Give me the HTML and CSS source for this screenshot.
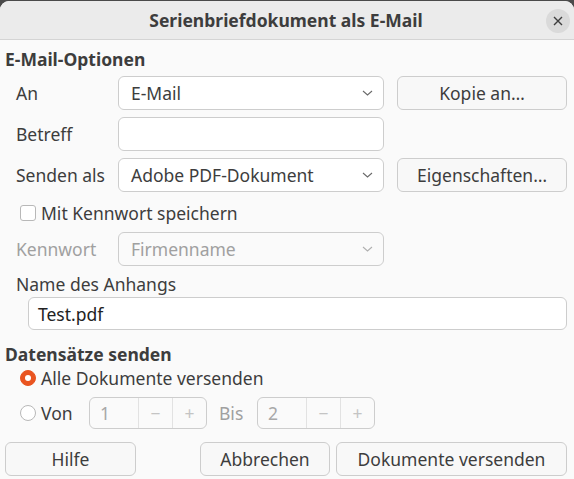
FILE: index.html
```html
<!DOCTYPE html>
<html lang="de">
<head>
<meta charset="utf-8">
<title>Serienbriefdokument als E-Mail</title>
<link rel="stylesheet" href="styles.css">
</head>
<body>
<div class="dialog">
  <div class="titlebar">
    <div class="title">Serienbriefdokument als E-Mail</div>
    <div class="close">
      <svg width="10" height="10" viewBox="0 0 10 10"><path d="M1 1 L9 9 M9 1 L1 9" stroke="#3d3d3d" stroke-width="1.4" fill="none"/></svg>
    </div>
  </div>
  <div class="content">
    <div class="section-title first">E-Mail-Optionen</div>
    <div class="form">
      <div class="label">An</div>
      <div class="combo"><span>E-Mail</span><svg class="chev" width="11" height="6" viewBox="0 0 11 6"><path d="M1 1 L5.5 5 L10 1" stroke="#6a6a6a" stroke-width="1.1" fill="none"/></svg></div>
      <div class="btn">Kopie an…</div>

      <div class="label">Betreff</div>
      <div class="entry"></div>
      <div></div>

      <div class="label">Senden als</div>
      <div class="combo"><span>Adobe PDF-Dokument</span><svg class="chev" width="11" height="6" viewBox="0 0 11 6"><path d="M1 1 L5.5 5 L10 1" stroke="#6a6a6a" stroke-width="1.1" fill="none"/></svg></div>
      <div class="btn">Eigenschaften…</div>

      <div class="check-row"><span class="checkbox"></span><span>Mit Kennwort speichern</span></div>

      <div class="label disabled">Kennwort</div>
      <div class="combo disabled"><span>Firmenname</span><svg class="chev" width="11" height="6" viewBox="0 0 11 6"><path d="M1 1 L5.5 5 L10 1" stroke="#b0b0b0" stroke-width="1.1" fill="none"/></svg></div>
      <div></div>
    </div>
    <div class="attach-label">Name des Anhangs</div>
    <div class="entry attach">Test.pdf</div>

    <div class="section-title second">Datensätze senden</div>
    <div class="radio-row first-radio"><span class="radio checked"></span><span>Alle Dokumente versenden</span></div>
    <div class="radio-row range">
      <span class="radio"></span><span class="von">Von</span>
      <div class="spin"><span class="spin-val">1</span><span class="spin-btn">−</span><span class="spin-btn">+</span></div>
      <span class="bis">Bis</span>
      <div class="spin"><span class="spin-val">2</span><span class="spin-btn">−</span><span class="spin-btn">+</span></div>
    </div>

    <div class="buttons">
      <div class="btn help">Hilfe</div>
      <div class="spacer"></div>
      <div class="btn cancel">Abbrechen</div>
      <div class="btn send">Dokumente versenden</div>
    </div>
  </div>
</div>
</body>
</html>
```

FILE: styles.css
```css
* { box-sizing: border-box; }
html, body {
  margin: 0;
  padding: 0;
  background: #4a4a4a;
  height: 479px;
  overflow: hidden;
}
body {
  font-family: "Noto Sans", "DejaVu Sans", sans-serif;
  font-size: 17.5px;
  color: #3d3d3d;
}
.dialog {
  margin-top: 1px;
  height: 478px;
  background: #fafafa;
  border-radius: 9px 9px 0 0;
  overflow: hidden;
}
.titlebar {
  height: 39px;
  background: #ebebeb;
  border-bottom: 1px solid #d4d4d4;
  display: flex;
  align-items: center;
  justify-content: center;
  position: relative;
}
.title {
  font-weight: bold;
  font-size: 17.5px;
  margin-left: -2px;
}
.close {
  position: absolute;
  right: 4px;
  top: 8px;
  width: 24px;
  height: 24px;
  border-radius: 50%;
  background: #dadada;
  display: flex;
  align-items: center;
  justify-content: center;
}
.content {
  padding: 0 7px 0 5px;
}
.section-title {
  font-weight: bold;
  line-height: 24px;
}
.section-title.first { margin-top: 7px; }
.form {
  margin-top: 5px;
  display: grid;
  grid-template-columns: 100px 266px 170px;
  column-gap: 13px;
  grid-auto-rows: auto;
  row-gap: 7px;
}
.label {
  padding-left: 11px;
  display: flex;
  align-items: center;
  height: 34px;
}
.disabled { color: #a0a0a0; }
.combo, .entry, .btn, .spin {
  height: 34px;
  border: 1px solid #cdcdcd;
  border-radius: 6px;
}
.combo, .entry {
  background: #ffffff;
  display: flex;
  align-items: center;
  padding: 0 10px 0 12px;
  justify-content: space-between;
}
.combo.disabled { background: #fafafa; }
.btn {
  background: #f8f8f8;
  display: flex;
  align-items: center;
  justify-content: center;
}
.check-row {
  grid-column: 1 / 4;
  display: flex;
  align-items: center;
  height: 28px;
  padding-left: 15px;
  margin-top: 0;
  margin-bottom: -2px;
}
.checkbox {
  width: 16px;
  height: 16px;
  border: 1px solid #b8b8b8;
  border-radius: 3px;
  background: #fff;
  margin-right: 5px;
}
.attach-label {
  padding-left: 11px;
  line-height: 24px;
  margin-top: 6px;
}
.entry.attach {
  margin-top: 1px;
  margin-left: 23px;
  height: 33px;
  color: #222;
  padding-left: 9px;
}
.section-title.second { margin-top: 12px; }
.radio-row {
  display: flex;
  align-items: center;
  padding-left: 15px;
}
.first-radio { height: 24px; }
.radio {
  width: 16px;
  height: 16px;
  border-radius: 50%;
  border: 1px solid #b8b8b8;
  background: #fff;
  margin-right: 5px;
  flex: none;
}
.radio.checked {
  background: #e95420;
  border-color: #e95420;
  position: relative;
}
.radio.checked::after {
  content: "";
  position: absolute;
  left: 4px;
  top: 4px;
  width: 6px;
  height: 6px;
  border-radius: 50%;
  background: #fff;
}
.range {
  margin-top: 7px;
  height: 32px;
}
.von { width: 48px; }
.spin {
  height: 32px;
  width: 118px;
  display: flex;
  background: #fafafa;
  color: #a8a8a8;
}
.spin-val {
  width: 48px;
  display: flex;
  align-items: center;
  padding-left: 10px;
}
.spin-btn {
  width: 34px;
  border-left: 1px solid #e2e2e2;
  display: flex;
  align-items: center;
  justify-content: center;
  color: #c4c4c4;
}
.bis {
  color: #a0a0a0;
  margin: 0 12px 0 12px;
  width: 26px;
}
.buttons {
  margin-top: 13px;
  display: flex;
  gap: 6px;
}
.buttons .btn { height: 34px; }
.help { width: 131px; margin-left: 0; }
.spacer { flex: 1; }
.cancel { width: 130px; }
.send { width: 231px; }
```
